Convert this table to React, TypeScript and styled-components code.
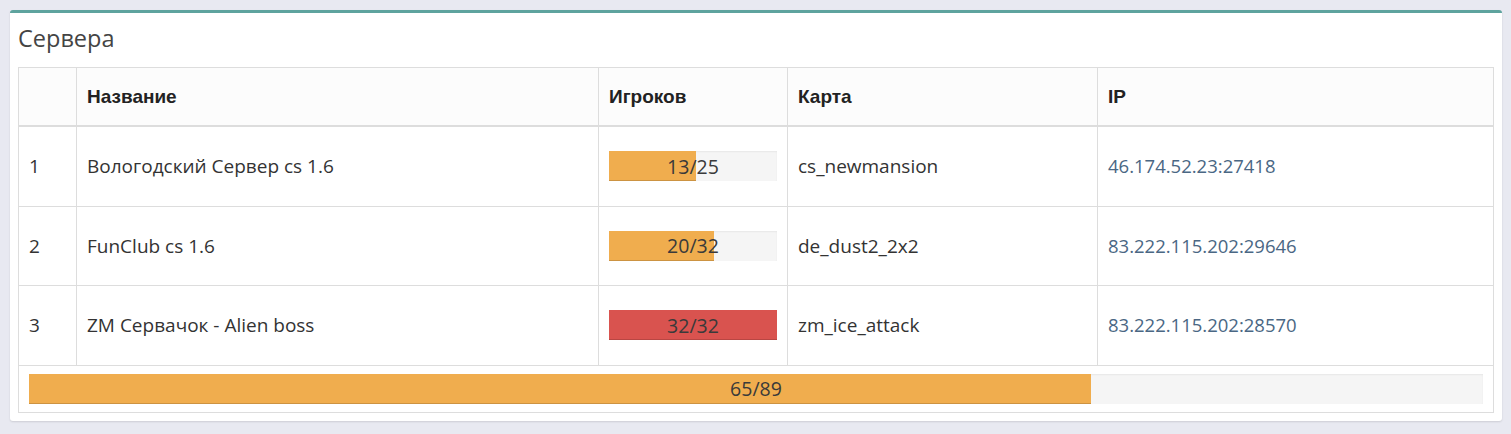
import React from "react";
import styled, { createGlobalStyle } from "styled-components";

const GlobalStyle = createGlobalStyle`
  body {
    margin: 0;
    background: #e8e9f1;
    font-family: "Open Sans", Lato, sans-serif;
    color: #333;
  }
`;

const Page = styled.div`
  padding: 10px 9px 10px 10px;
`;

const Box = styled.section`
  background: #fff;
  border-top: 3px solid #5ea39e;
  border-radius: 3px;
  box-shadow: 0 1px 2px rgba(0, 0, 0, 0.12);
  padding: 0 8px 8px;
`;

const Title = styled.h3`
  margin: 0;
  height: 54px;
  box-sizing: border-box;
  padding-bottom: 5px;
  display: flex;
  align-items: center;
  font-family: "Open Sans", sans-serif;
  font-weight: 400;
  font-size: 23.5px;
  color: #444;
`;

const Table = styled.table`
  width: 100%;
  border-collapse: collapse;
  border: 1px solid #ddd;
  table-layout: fixed;

  th,
  td {
    border: 1px solid #ddd;
    padding: 0 10px;
    text-align: left;
    vertical-align: middle;
  }

  th {
    height: 57px;
    border-bottom-width: 2px;
    font-family: "Liberation Sans", Arial, sans-serif;
    font-weight: 700;
    font-size: 19px;
    color: #222;
    background: #fcfcfc;
  }

  td {
    height: 78.5px;
    font-size: 19px;
    color: #333;
  }
`;

const Col = styled.col<{ $w?: number }>`
  width: ${p => (p.$w ? `${p.$w}px` : "auto")};
`;

const Ip = styled.span`
  color: #4a6784;
  font-size: 18.5px;
`;

const Progress = styled.div`
  position: relative;
  height: 30px;
  background: #f5f5f5;
  box-shadow: inset 0 1px 2px rgba(0, 0, 0, 0.06);
  overflow: hidden;
`;

const Fill = styled.div<{ $full: boolean }>`
  height: 100%;
  background: ${p => (p.$full ? "#d9534f" : "#f0ad4e")};
  box-shadow: inset 0 -1px 0 rgba(0, 0, 0, 0.15);
`;

const Label = styled.span`
  position: absolute;
  inset: 0;
  display: flex;
  align-items: center;
  justify-content: center;
  font-size: 19.5px;
  color: #3a3a3a;
`;

const FootCell = styled.td`
  && {
    height: auto;
    padding: 8px 10px 8px;
  }
`;

const Bar: React.FC<{ cur: number; max: number }> = ({ cur, max }) => (
  <Progress>
    <Fill $full={cur >= max} style={{ width: `${(cur / max) * 100}%` }} />
    <Label>
      {cur}/{max}
    </Label>
  </Progress>
);

const servers = [
  { name: "Вологодский Сервер cs 1.6", cur: 13, max: 25, map: "cs_newmansion", ip: "46.174.52.23:27418" },
  { name: "FunClub cs 1.6", cur: 20, max: 32, map: "de_dust2_2x2", ip: "83.222.115.202:29646" },
  { name: "ZM Сервачок - Alien boss", cur: 32, max: 32, map: "zm_ice_attack", ip: "83.222.115.202:28570" },
];

export default function App() {
  const total = servers.reduce((s, x) => s + x.cur, 0);
  const totalMax = servers.reduce((s, x) => s + x.max, 0);
  return (
    <Page>
      <GlobalStyle />
      <Box>
        <Title>Сервера</Title>
        <Table>
          <colgroup>
            <Col $w={58} />
            <Col $w={522} />
            <Col $w={189} />
            <Col $w={310} />
            <Col />
          </colgroup>
          <thead>
            <tr>
              <th></th>
              <th>Название</th>
              <th>Игроков</th>
              <th>Карта</th>
              <th>IP</th>
            </tr>
          </thead>
          <tbody>
            {servers.map((s, i) => (
              <tr key={s.ip}>
                <td>{i + 1}</td>
                <td>{s.name}</td>
                <td>
                  <Bar cur={s.cur} max={s.max} />
                </td>
                <td>{s.map}</td>
                <td>
                  <Ip>{s.ip}</Ip>
                </td>
              </tr>
            ))}
            <tr>
              <FootCell colSpan={5}>
                <Bar cur={total} max={totalMax} />
              </FootCell>
            </tr>
          </tbody>
        </Table>
      </Box>
    </Page>
  );
}
